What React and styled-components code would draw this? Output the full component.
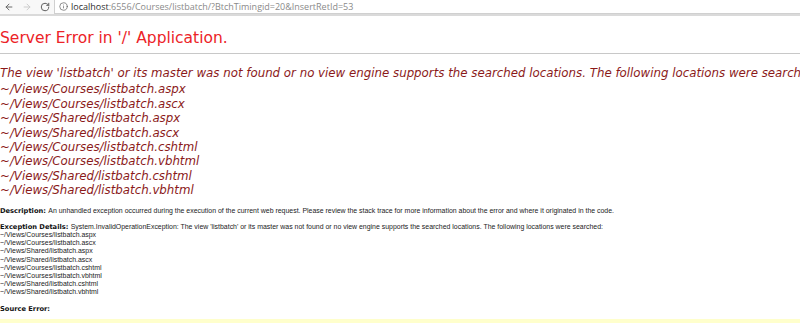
import React from "react";
import styled, { createGlobalStyle } from "styled-components";
import { ArrowLeft, ArrowRight, RotateCw, Info } from "lucide-react";

const GlobalStyle = createGlobalStyle`
  html, body {
    margin: 0;
    padding: 0;
    background: #ffffff;
    overflow: hidden;
  }
`;

const searched = [
  "~/Views/Courses/listbatch.aspx",
  "~/Views/Courses/listbatch.ascx",
  "~/Views/Shared/listbatch.aspx",
  "~/Views/Shared/listbatch.ascx",
  "~/Views/Courses/listbatch.cshtml",
  "~/Views/Courses/listbatch.vbhtml",
  "~/Views/Shared/listbatch.cshtml",
  "~/Views/Shared/listbatch.vbhtml",
];

const App = () => {
  return (
    <Page>
      <GlobalStyle />
      <Toolbar>
        <NavButton>
          <ArrowLeft size={10} strokeWidth={2.2} />
        </NavButton>
        <NavButton $disabled>
          <ArrowRight size={10} strokeWidth={2.2} />
        </NavButton>
        <NavButton>
          <RotateCw size={10} strokeWidth={2.4} />
        </NavButton>
        <Address>
          <Info size={9} strokeWidth={1.8} color="#5a5a5a" />
          <Url>
            <b>localhost</b>:6556/Courses/listbatch/?BtchTimingid=20&amp;InsertRetId=53
          </Url>
        </Address>
      </Toolbar>

      <Content>
        <Title>Server Error in '/' Application.</Title>
        <Rule />
        <Message>
          The view 'listbatch' or its master was not found or no view engine supports the searched locations. The following locations were searched:
          <PathList>
            {searched.map((p) => (
              <div key={p}>{p}</div>
            ))}
          </PathList>
        </Message>

        <Details>
          <Para>
            <Label>Description: </Label>
            An unhandled exception occurred during the execution of the current web request. Please review the stack trace for more information about the error and where it originated in the code.
          </Para>
          <Para>
            <Label>Exception Details: </Label>
            System.InvalidOperationException: The view 'listbatch' or its master was not found or no view engine supports the searched locations. The following locations were searched:
            {searched.map((p) => (
              <div key={p}>{p}</div>
            ))}
          </Para>
          <Para>
            <Label>Source Error:</Label>
          </Para>
        </Details>
        <SourceBox />
      </Content>
    </Page>
  );
};

export default App;

const Page = styled.div`
  width: 800px;
  height: 323px;
  overflow: hidden;
  background: #ffffff;
`;

const Toolbar = styled.div`
  height: 14px;
  display: flex;
  align-items: center;
  background: #f8f8f8;
  border-bottom: 2px solid #dadada;
`;

const NavButton = styled.div`
  width: 18px;
  height: 14px;
  display: flex;
  align-items: center;
  justify-content: center;
  color: ${(p) => (p.$disabled ? "#c8c8c8" : "#5f5f5f")};
`;

const Address = styled.div`
  flex: 1;
  height: 14px;
  box-sizing: border-box;
  background: #ffffff;
  border: 1px solid #d0d0d0;
  border-top: none;
  border-right: none;
  display: flex;
  align-items: center;
  gap: 3px;
  padding-left: 4px;
`;

const Url = styled.span`
  font-family: "Open Sans", "Liberation Sans", sans-serif;
  font-size: 9px;
  color: #8a8a8a;
  white-space: nowrap;

  b {
    font-weight: 400;
    color: #303030;
  }
`;

const Content = styled.div`
  padding-top: 10px;
`;

const Title = styled.h1`
  margin: 0;
  font-family: "DejaVu Sans", Verdana, sans-serif;
  font-weight: 400;
  font-size: 15.5px;
  line-height: 24px;
  color: #ec2328;
  white-space: nowrap;
`;

const Rule = styled.hr`
  margin: 3px 0 0;
  border: none;
  border-top: 1px solid #c8c8c8;
  height: 0;
`;

const Message = styled.h2`
  margin: 12px 0 0;
  font-family: "DejaVu Sans", Verdana, sans-serif;
  font-weight: 400;
  font-style: italic;
  font-size: 11.8px;
  line-height: 14.4px;
  color: #8b1a1a;
  white-space: nowrap;
`;

const PathList = styled.div`
  padding-top: 2px;
`;

const Details = styled.div`
  margin-top: 9px;
  font-family: "Liberation Sans", Arial, sans-serif;
  font-size: 6.95px;
  line-height: 8.2px;
  color: #222222;
`;

const Para = styled.div`
  margin-bottom: 8px;
  white-space: nowrap;

  &:last-child {
    margin-bottom: 6px;
  }
`;

const Label = styled.span`
  font-family: "DejaVu Sans", Verdana, sans-serif;
  font-weight: 700;
  font-size: 6.7px;
  color: #111111;
`;

const SourceBox = styled.div`
  height: 20px;
  background: #ffffcc;
`;
